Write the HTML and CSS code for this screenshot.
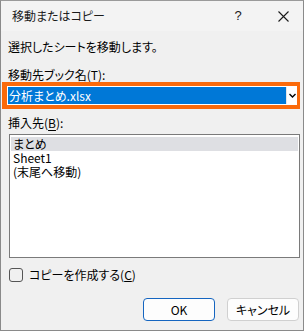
FILE: index.html
```html
<!DOCTYPE html>
<html lang="ja">
<head>
    <meta charset="UTF-8">
    <meta name="viewport" content="width=device-width, initial-scale=1.0">
    <title>移動またはコピー</title>
    <link rel="stylesheet" href="styles.css">
</head>
<body>
    <div class="dialog">
        <div class="titlebar">
            <span class="title">移動またはコピー</span>
            <span class="help">?</span>
            <span class="close">
                <svg width="11" height="11" viewBox="0 0 11 11"><path d="M0.5 0.5 L10.5 10.5 M10.5 0.5 L0.5 10.5" stroke="#1a1a1a" stroke-width="1.1" fill="none"/></svg>
            </span>
        </div>
        <div class="content">
            <p class="msg">選択したシートを移動します。</p>
            <label class="label">移動先ブック名(<u>T</u>):</label>
            <div class="highlight">
                <div class="combo">
                    <div class="combo-value">分析まとめ.xlsx</div>
                    <div class="combo-arrow">
                        <svg width="7" height="5" viewBox="0 0 7 5"><path d="M0.5 1 L3.5 4 L6.5 1" stroke="#000" stroke-width="1.4" fill="none"/></svg>
                    </div>
                </div>
            </div>
            <label class="label label-insert">挿入先(<u>B</u>):</label>
            <ul class="listbox">
                <li class="selected">まとめ</li>
                <li>Sheet1</li>
                <li>(末尾へ移動)</li>
            </ul>
            <div class="check-row">
                <span class="checkbox"></span>
                <span>コピーを作成する(<u>C</u>)</span>
            </div>
            <div class="buttons">
                <button type="button" class="btn btn-default">OK</button>
                <button type="button" class="btn">キャンセル</button>
            </div>
        </div>
    </div>
</body>
</html>
```

FILE: styles.css
```css
body {
    margin: 0;
    font-family: "Noto Sans CJK JP", "Noto Sans", sans-serif;
    font-feature-settings: "palt";
    font-size: 12px;
    line-height: 14px;
    color: #000;
}
.dialog {
    width: 304px;
    height: 331px;
    box-sizing: border-box;
    border: 1px solid #8a8a8a;
    border-top-color: #9a9a9a;
    background-color: #f0f0f0;
    display: flex;
    flex-direction: column;
    overflow: hidden;
}
.titlebar {
    height: 30px;
    flex-shrink: 0;
    background-color: #f3f3f3;
    display: flex;
    align-items: center;
    padding-left: 11px;
    color: #1a1a1a;
}
.title {
    flex: 1;
}
.help {
    width: 14px;
    margin-right: 33px;
    font-family: "Liberation Sans", sans-serif;
    font-size: 13px;
    text-align: center;
}
.close {
    display: flex;
    margin-right: 14px;
}
.content {
    flex: 1;
    padding: 0 3px 0 7px;
    display: flex;
    flex-direction: column;
}
.msg {
    margin: 9px 0 0;
    height: 14px;
}
.label {
    display: block;
    height: 14px;
    margin-top: 14px;
}
.label u {
    text-decoration-thickness: 1px;
    text-underline-offset: 2px;
}
.highlight {
    flex-shrink: 0;
    margin: 0 0 0 -6px;
    border: 4px solid #fb6a0a;
    border-left-width: 5px;
    border-right-width: 3px;
}
.combo {
    display: flex;
    height: 19px;
    box-sizing: border-box;
    background-color: #fff;
    padding: 1px 0 1px 1px;
}
.combo-value {
    flex: 1;
    background-color: #0078d7;
    color: #fff;
    line-height: 17px;
    padding-left: 1px;
}
.combo-arrow {
    width: 10px;
    display: flex;
    align-items: center;
    justify-content: center;
    background-color: #fff;
    border-left: 1px solid #e6e6e6;
}
.label-insert {
    margin-top: 7px;
}
.listbox {
    flex-shrink: 0;
    list-style: none;
    margin: 4px 0 0 1px;
    padding: 2px 1px;
    height: 124px;
    box-sizing: border-box;
    background-color: #fff;
    border: 1px solid #7a7a7a;
}
.listbox li {
    height: 14px;
    padding-left: 2px;
}
.listbox li.selected {
    background-color: #dedfe3;
}
.check-row {
    display: flex;
    align-items: center;
    height: 14px;
    margin-top: 10px;
    margin-left: 1px;
}
.checkbox {
    width: 12px;
    height: 12px;
    border: 1px solid #555;
    border-radius: 3px;
    margin-right: 6px;
    background-color: #f0f0f0;
}
.check-row u {
    text-decoration-thickness: 1px;
}
.buttons {
    display: flex;
    justify-content: flex-end;
    gap: 12px;
    margin-top: 16px;
    margin-right: 1px;
}
.btn {
    width: 72px;
    height: 23px;
    font-family: inherit;
    font-feature-settings: "palt";
    font-size: 12px;
    color: #000;
    background-color: #fdfdfd;
    border: 1px solid #d0d0d0;
    border-radius: 4px;
    padding: 0;
}
.btn-default {
    border-color: #1565c0;
}
```
